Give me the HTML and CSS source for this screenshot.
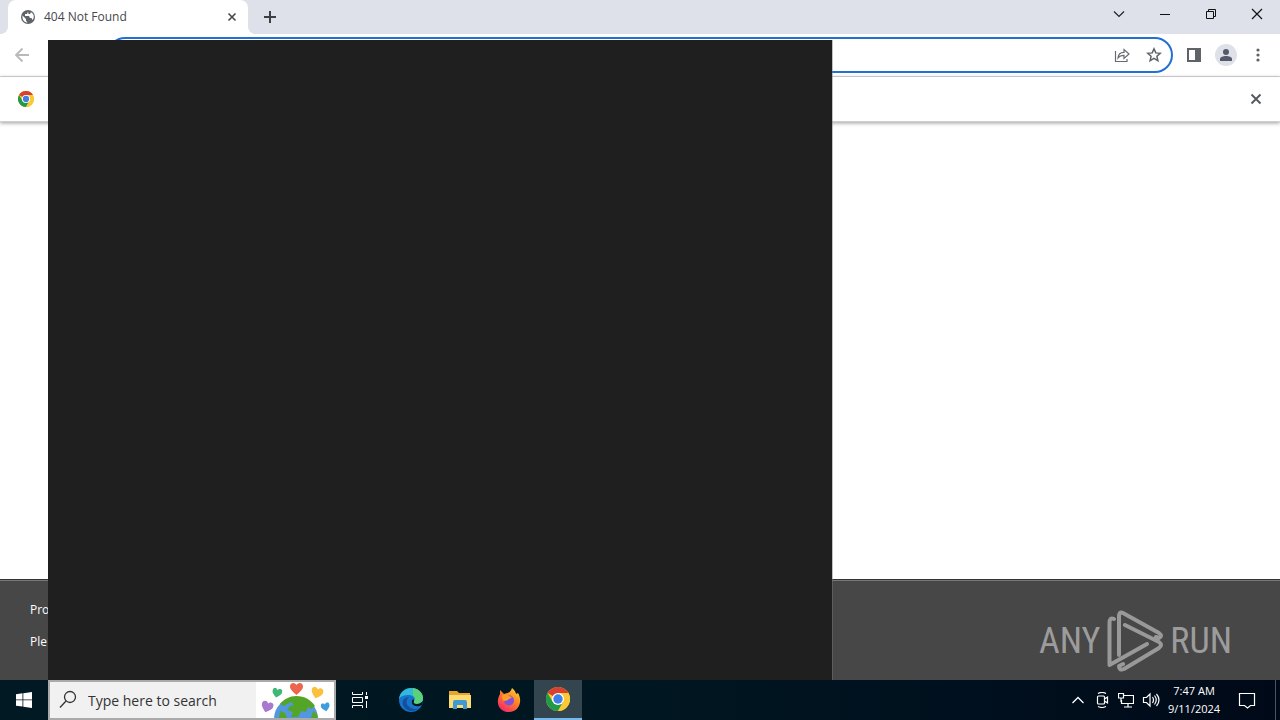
FILE: index.html
```html
<!DOCTYPE html>
<html lang="en">
<head>
<meta charset="utf-8">
<title>404 Not Found</title>
<link rel="stylesheet" href="styles.css">
</head>
<body>
<svg class="defs" aria-hidden="true">
  <symbol id="chrome" viewBox="0 0 24 24">
    <circle cx="12" cy="12" r="12" fill="#fbc934"/>
    <path d="M12 12 1.600 6A12 12 0 0 1 22.400 6H12z" fill="#d8412f"/>
    <path d="M1.600 6A12 12 0 0 0 12 24l5.200-9L12 12 6.800 15z" fill="#229a48"/>
    <path d="M22.400 6A12 12 0 0 1 12 24l5.200-9A6 6 0 0 0 17 9L12 6z" fill="#fbc934"/>
    <circle cx="12" cy="12" r="6" fill="#fff"/>
    <circle cx="12" cy="12" r="4.700" fill="#3f80e8"/>
  </symbol>
  <symbol id="heart" viewBox="0 0 24 22"><path d="M12 22C5 16 0 12 0 6.500C0 2 3 0 6 0c3 0 5 2 6 4 1-2 3-4 6-4 3 0 6 2 6 6.500C24 12 19 16 12 22z"/></symbol>
</svg>
<header class="tabs">
  <div class="tab">
    <svg class="i16" viewBox="0 0 16 16"><circle cx="8" cy="8" r="7" fill="#5f6368"/><path d="M2.500 6.500 6 10v1.500l1.500 2C4.500 13.500 2 11 2.500 6.500zM8 2.500 7 5H5v2h4l1 2h1.500l1 2C15 8 13.500 4 11 3.200L10 5H8.500z" fill="#fff"/></svg>
    <span class="tab-title">404 Not Found</span>
    <button class="icon-btn" aria-label="Close tab"><svg class="i16" viewBox="0 0 16 16"><path d="m4.500 4.500 7 7m0-7-7 7" stroke="#45494d" stroke-width="1.600"/></svg></button>
  </div>
  <button class="icon-btn new-tab" aria-label="New tab"><svg class="i16" viewBox="0 0 16 16"><path d="M8 2v12M2 8h12" stroke="#3c4043" stroke-width="2"/></svg></button>
  <div class="win-controls">
    <button class="icon-btn" aria-label="Search tabs"><svg class="i16" viewBox="0 0 16 16"><path d="m3 5.500 5 5 5-5" fill="none" stroke="#222" stroke-width="1.200"/></svg></button>
    <button class="icon-btn" aria-label="Minimize"><svg class="i16" viewBox="0 0 16 16"><path d="M3 8.500h10" stroke="#111"/></svg></button>
    <button class="icon-btn" aria-label="Restore"><svg class="i16" viewBox="0 0 16 16"><path d="M3.500 5.500h7v7h-7zM5.500 5V3.500h7v7H11" fill="none" stroke="#111"/></svg></button>
    <button class="icon-btn" aria-label="Close"><svg class="i16" viewBox="0 0 16 16"><path d="m3 3 10 10m0-10L3 13" stroke="#111" stroke-width="1.200"/></svg></button>
  </div>
</header>
<nav class="toolbar">
  <button class="icon-btn back" aria-label="Back"><svg class="i16" viewBox="0 0 16 16"><path d="M15 8H2m6.500-6.500L2 8l6.500 6.500" fill="none" stroke="#b7b9bb" stroke-width="1.800"/></svg></button>
  <div class="address">
    <input class="url" type="text" aria-label="Address and search bar">
    <button class="icon-btn" aria-label="Share"><svg class="i16" viewBox="0 0 16 16"><path d="M1.500 4v10.500H13V12M4 11c.3-4 2.500-5.700 6-5.700V2.500L15 7l-5 4.500V8.300C7.500 8.300 5.500 9 4 11z" fill="none" stroke="#676b70" stroke-width="1.200"/></svg></button>
    <button class="icon-btn" aria-label="Bookmark"><svg class="i16" viewBox="0 0 16 16"><path d="m8 1.800 1.800 4.100 4.500.4-3.400 3 1 4.400L8 11.400l-3.900 2.300 1-4.400-3.400-3 4.500-.4z" fill="none" stroke="#5f6368" stroke-width="1.500"/></svg></button>
  </div>
  <button class="icon-btn" aria-label="Side panel"><svg class="i16" viewBox="0 0 16 16"><path d="M1 1h14v14H1zM3 3v10h6V3z" fill="#5f6368" fill-rule="evenodd"/></svg></button>
  <button class="icon-btn avatar" aria-label="Profile"><svg class="i22" viewBox="0 0 22 22"><circle cx="11" cy="11" r="11" fill="#dee1e8"/><circle cx="11" cy="8" r="3" fill="#55596c"/><path d="M5 17v-2c0-2 3-3 6-3s6 1 6 3v2z" fill="#55596c"/></svg></button>
  <button class="icon-btn" aria-label="Menu"><svg class="i16" viewBox="0 0 16 16" fill="#5f6368"><circle cx="8" cy="3" r="1.600"/><circle cx="8" cy="8" r="1.600"/><circle cx="8" cy="13" r="1.600"/></svg></button>
</nav>
<section class="infobar">
  <svg class="i16" viewBox="0 0 24 24"><use href="#chrome"/></svg>
  <button class="icon-btn" aria-label="Dismiss"><svg class="i16" viewBox="0 0 16 16"><path d="m3.500 3.500 9 9m0-9-9 9" stroke="#55595d" stroke-width="1.900"/></svg></button>
</section>
<main class="page"></main>
<footer class="footer">
  <div class="notes"><p>Pro</p><p>Ple</p></div>
  <div class="brand"><span>ANY</span>
    <svg class="brand-mark" viewBox="0 0 56 62" fill="none" stroke="#999" stroke-width="4" stroke-linejoin="round" stroke-linecap="round"><path d="M7 9Q2.500 7 2.500 13v42L40 34"/><path d="M12 45V6q0-5 4-3l36 20q4 3 0 5l-3-1"/><path d="m18 15 34 17q4 3 0 6L17 59q-5 2-5-3l4-2"/></svg>
    <span>RUN</span></div>
</footer>
<footer class="taskbar">
  <button class="icon-btn start" aria-label="Start"><svg class="i16" viewBox="0 0 16 16" fill="#fff"><path d="M0 2.200 6.500 1.300v6.200H0zM7.300 1.200 16 0v7.500H7.300zM0 8.300h6.500v6.300L0 13.700zM7.300 8.300H16V16l-8.700-1.200z"/></svg></button>
  <label class="search">
    <svg class="i20" viewBox="0 0 20 20"><circle cx="12" cy="7" r="5.500" fill="none" stroke="#333" stroke-width="1.300"/><path d="m8 11-6 6.500" stroke="#333" stroke-width="1.300"/></svg>
    <input type="text" placeholder="Type here to search" aria-label="Search">
    <svg class="globe" viewBox="0 0 78 36">
      <path fill="#fff" d="M0 0h78v36H0z"/>
      <circle cx="40" cy="37" r="22" fill="#5297df"/>
      <path d="M24 22c4-5 10-8 16-8 9 0 15 4 19 10l-4 3-3-2-2 5-5-1-3 6h-7l2-5-6-2 3-4 4-1-3-3-4 2-3 2zM57 29l4 3 1 4h-7zM24 29l5 2 2 5h-8z" fill="#54a526"/>
      <use href="#heart" x="34" y="1" width="13" height="12" fill="#ee654e"/>
      <use href="#heart" x="16" y="6" width="10" height="10" fill="#3fb777" transform="rotate(12 21 11)"/>
      <use href="#heart" x="55" y="5" width="12" height="12" fill="#fbc13d" transform="rotate(15 61 11)"/>
      <use href="#heart" x="5" y="19" width="12" height="12" fill="#a879cf" transform="rotate(18 11 25)"/>
      <use href="#heart" x="65" y="20" width="9" height="10" fill="#3c9dde" transform="rotate(-12 70 25)"/>
    </svg>
  </label>
  <div class="apps">
    <button class="app task-view" aria-label="Task view"><svg class="i18" viewBox="0 0 18 18" fill="none" stroke="#fff"><path d="M1.500 1v2.500h10V1M1.500 6.500h10v5h-10zM1.500 17v-2.500h10V17M15.500 1v3M15.500 10v7"/><path d="M14 5h3v3h-3z" fill="#fff" stroke="none"/></svg></button>
    <button class="app" aria-label="Edge"><svg class="i26" viewBox="0 0 26 26"><circle cx="13" cy="13" r="12" fill="#1774c8"/><path d="M1 12C2 5 7 1 13 1c7 0 12 5 12 10 0 4-3 6-6 6-4 0-4-2-3-3 2-2 0-6-5-6-5 0-8 1-10 4z" fill="#30b9dc"/><path d="M15 1c6 1 10 5 10 10 0 4-3 6-6 6-4 0-4-2-3-3 2-2 1-4-1-5z" fill="#5bd17a"/><path d="M11 10c-4 3-3 9 2 11 4 2 8 1 10-2-5 6-13 7-17 1-3-5-1-9 5-10z" fill="#124f9d"/><path d="M16 14c-1 2 0 3 3 3 2 0 4-1 6-3l-1 4c-6 3-11 0-10-4 0-1 1-2 2-1z" fill="#001620"/></svg></button>
    <button class="app" aria-label="File Explorer"><svg class="i22" viewBox="0 0 22 22"><path d="M0 2h8l2 2h11v15H0z" fill="#e6a62d"/><path d="M0 6h22v13H0z" fill="#fddb72"/><path d="M4 20v-7q0-2 2-2h10q2 0 2 2v7h-4v-4H8v4z" fill="#3f9ad4"/></svg></button>
    <button class="app" aria-label="Firefox"><svg class="i24" viewBox="0 0 24 24"><defs><linearGradient id="fox" x1="1" y1="0" x2=".3" y2="1"><stop stop-color="#ffe443"/><stop offset=".45" stop-color="#ff8a24"/><stop offset="1" stop-color="#f52b65"/></linearGradient></defs><path d="M3 6V2l4 4 3-1c2 0 4-2 5-5 3 2 4 5 4 6l2-1c5 8 1 19-9 19S-2 15 3 6z" fill="url(#fox)"/><circle cx="12" cy="12.500" r="5" fill="#8151dc"/><path d="M5 8c2-2 5-2 7 0l3 1c-1 2-3 1-4 3l-3 1c-2 0-3-2-3-5z" fill="#ff9d25"/></svg></button>
    <button class="app active" aria-label="Chrome"><svg class="i24" viewBox="0 0 24 24"><use href="#chrome"/></svg></button>
  </div>
  <div class="tray">
    <svg class="i16" viewBox="0 0 16 16"><path d="m2.500 11 5.500-5.500L13.500 11" fill="none" stroke="#fff" stroke-width="1.300"/></svg>
    <svg class="i16" viewBox="0 0 16 16" fill="none" stroke="#fff" stroke-width="1.200"><path d="M4.500 4h5q1 0 1 1v6q0 1-1 1h-5q-1 0-1-1V5q0-1 1-1zM10.500 7l3-2v6l-3-2M4 1.500q4-2 8 0M4 14.500q4 2 8 0"/></svg>
    <svg class="i16" viewBox="0 0 16 16" fill="none" stroke="#fff" stroke-width="1.200"><path d="M6 3.500h9.500v8H3.500V8M10 12v3M6 15h8M.5 1.500h5V6h-5zM3 6v4"/></svg>
    <svg class="i18" viewBox="0 0 18 18" fill="none" stroke="#fff" stroke-width="1.200"><path d="M1.500 6.500h3L8 3v12l-3.500-3.500h-3zM10.500 6q2 3 0 6M12.500 4.500q3.500 4.500 0 9M14.500 3q5 6 0 12"/></svg>
    <div class="clock"><time>7:47 AM</time><time>9/11/2024</time></div>
    <svg class="i18" viewBox="0 0 18 18"><path d="M1.500 2.500h15v12h-4L9.500 17l-3-2.500h-5z" fill="none" stroke="#fff" stroke-width="1.200"/></svg>
  </div>
</footer>
<div class="dark-window"></div>
</body>
</html>
```
FILE: styles.css
```css
* { box-sizing: border-box; }
body {
  margin: 0;
  height: 100vh;
  display: flex;
  flex-direction: column;
  position: relative;
  overflow: hidden;
  background: #fff;
  font: 12px/18px "Open Sans", "Noto Sans", sans-serif;
  color: #45484c;
}
svg { display: block; flex: none; }
.defs { position: absolute; width: 0; height: 0; }
.i16 { width: 16px; height: 16px; }
.i18 { width: 18px; height: 18px; }
.i20 { width: 20px; height: 20px; }
.i22 { width: 22px; height: 22px; }
.i24 { width: 24px; height: 24px; }
.i26 { width: 26px; height: 26px; }
button { padding: 0; border: 0; background: none; }
.icon-btn { display: flex; align-items: center; justify-content: center; }
.tabs {
  flex: none;
  height: 34px;
  display: flex;
  background: #dee1e9;
  padding-left: 8px;
}
.tab {
  width: 240px;
  display: flex;
  align-items: center;
  gap: 8px;
  padding: 0 8px 0 12px;
  background: #fff;
  border-radius: 8px 8px 0 0;
  position: relative;
}
.tab::before, .tab::after {
  content: "";
  position: absolute;
  bottom: 0;
  width: 8px;
  height: 8px;
}
.tab::before { right: 100%; background: radial-gradient(circle at 0 0, transparent 8px, #fff 8px); }
.tab::after { left: 100%; background: radial-gradient(circle at 100% 0, transparent 8px, #fff 8px); }
.tab-title { flex: 1; }
.new-tab { margin-left: 14px; }
.win-controls { margin-left: auto; height: 28px; display: flex; }
.win-controls button { width: 46px; }
.toolbar {
  flex: none;
  height: 43px;
  display: flex;
  align-items: center;
  gap: 13px;
  padding: 0 14px;
  border-bottom: 1px solid #d9dadd;
}
.toolbar > .back { margin-right: 64px; }
.address {
  flex: 1;
  height: 36px;
  display: flex;
  align-items: center;
  gap: 16px;
  padding: 0 9px;
  border: 2px solid #2170d2;
  border-radius: 18px;
}
.url { flex: 1; border: 0; outline: 0; background: none; font: inherit; }
.infobar {
  flex: none;
  height: 45px;
  display: flex;
  align-items: center;
  justify-content: space-between;
  padding: 0 16px 0 18px;
  border-bottom: 1px solid #d0d0d0;
  box-shadow: 0 1px 4px #0006;
}
.page { flex: 1; }
.footer {
  flex: none;
  height: 101px;
  display: flex;
  justify-content: space-between;
  padding: 21px 48px 0 30px;
  border-top: 1px solid #333;
  box-shadow: inset 0 1px #777;
  background: #474747;
  color: #fff;
}
.notes { display: grid; gap: 14px; align-content: start; }
.notes p { margin: 0; }
.brand {
  display: flex;
  align-items: center;
  gap: 7px;
  height: 80px;
  color: #9c9c9c;
  font: 36px/44px "Roboto Condensed", "Open Sans Condensed", "Liberation Sans Narrow", "Liberation Sans", sans-serif;
}
.brand-mark { width: 56px; height: 62px; }
.taskbar {
  flex: none;
  height: 40px;
  display: flex;
  background: linear-gradient(90deg, #001923, #001620 50%, #00101e 75%, #000918);
  box-shadow: inset -4px 0 #000918, inset -5px 0 #4b5360;
  color: #fff;
}
.start { width: 48px; }
.search {
  width: 288px;
  display: flex;
  align-items: center;
  gap: 10px;
  padding-left: 8px;
  background: #f1f1f1;
  border: 2px solid #aaa;
}
.search input {
  flex: 1;
  min-width: 0;
  padding: 2px 0 0;
  border: 0;
  outline: 0;
  background: none;
  font: 14px/20px "Open Sans", "Noto Sans", sans-serif;
}
.search input::placeholder { color: #333; opacity: 1; }
.globe { width: 78px; height: 36px; }
.apps { display: flex; gap: 1px; }
.app { width: 48px; display: flex; align-items: center; justify-content: center; }
.task-view { margin-right: 2px; }
.active { background: #33454f; border-bottom: 2px solid #76b9ed; }
.tray { margin-left: auto; display: flex; align-items: center; gap: 8px; padding-right: 24px; }
.clock { width: 52px; display: grid; justify-items: center; font-size: 11px; }
.tray > :last-child { margin-left: 10px; }
.dark-window {
  position: absolute;
  left: 48px;
  top: 40px;
  bottom: 40px;
  width: 785px;
  background: #1f1f1f;
  background-clip: padding-box;
  border-right: 1px solid #7777;
}
```
